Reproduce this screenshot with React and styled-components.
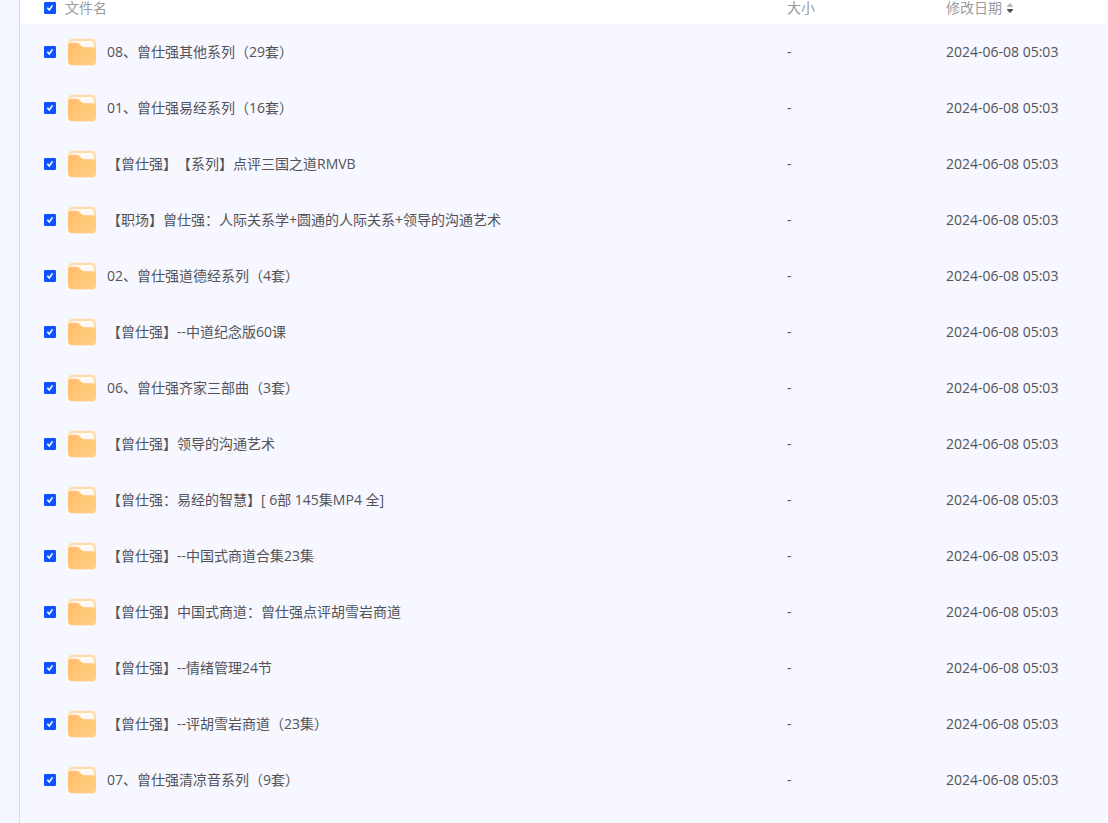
import React, { useState } from "react";
import styled, { createGlobalStyle } from "styled-components";

const GlobalStyle = createGlobalStyle`
  *, *::before, *::after {
    box-sizing: border-box;
  }
  body {
    margin: 0;
    background: #fff;
    font-family: "Open Sans", "Noto Sans CJK SC", sans-serif;
    font-size: 14px;
    line-height: 16px;
    color: #525358;
    text-spacing-trim: space-all;
  }
`;

const files = [
  "08、曾仕强其他系列（29套）",
  "01、曾仕强易经系列（16套）",
  "【曾仕强】【系列】点评三国之道RMVB",
  "【职场】曾仕强：人际关系学+圆通的人际关系+领导的沟通艺术",
  "02、曾仕强道德经系列（4套）",
  "【曾仕强】--中道纪念版60课",
  "06、曾仕强齐家三部曲（3套）",
  "【曾仕强】领导的沟通艺术",
  "【曾仕强：易经的智慧】[ 6部 145集MP4 全]",
  "【曾仕强】--中国式商道合集23集",
  "【曾仕强】中国式商道：曾仕强点评胡雪岩商道",
  "【曾仕强】--情绪管理24节",
  "【曾仕强】--评胡雪岩商道（23集）",
  "07、曾仕强清凉音系列（9套）",
  "",
].map((name, id) => ({
  id,
  name,
  size: name && "-",
  date: name && "2024-06-08 05:03",
}));

// Page layout
const Page = styled.div`
  display: flex;
  height: 100vh;
  overflow: hidden;
`;

const Sidebar = styled.aside`
  flex: none;
  width: 20px;
  background: #f3f6ff;
  border-right: 1px solid #d9dae3;
`;

const Main = styled.main`
  flex: 1;
  min-width: 0;
  padding-right: 2px;
`;

// File table
const Table = styled.table`
  width: 100%;
  table-layout: fixed;
  border-collapse: collapse;
`;

const Col = styled.col`
  width: ${({ $width }) => $width};
`;

const HeadCell = styled.th`
  height: 24px;
  padding: 0 0 8px ${({ $indent }) => $indent || "1px"};
  font-weight: 400;
  text-align: left;
  vertical-align: middle;
  color: #9a9b9f;
`;

const Row = styled.tr`
  height: 56px;
  background: linear-gradient(#f4f5fa, #f4f5fa) 24px 100% / 100% 1px no-repeat,
    #f7f7ff;
`;

const Cell = styled.td`
  height: 56px;
  padding: 0 0 0 ${({ $indent }) => $indent || "1px"};
  vertical-align: middle;
`;

const FileName = styled.label`
  display: flex;
  align-items: center;
  gap: 11px;
  white-space: nowrap;
`;

// Checkbox with its own tick drawn over the input
const CheckBox = styled.span`
  position: relative;
  display: block;
  width: 12px;
  height: 12px;
`;

const CheckInput = styled.input`
  appearance: none;
  display: block;
  width: 12px;
  height: 12px;
  margin: 0;
  border: 1px solid #c4c7d0;
  border-radius: 1px;
  background: #fff;
  &:checked {
    border-color: #0d53ff;
    background: #0d53ff;
  }
`;

const Tick = styled.svg`
  position: absolute;
  inset: 0;
  pointer-events: none;
`;

const Check = ({ id, label, checked, onChange }) => (
  <CheckBox>
    <CheckInput
      type="checkbox"
      id={id}
      aria-label={label}
      checked={checked}
      onChange={onChange}
    />
    {checked && (
      <Tick width="12" height="12" viewBox="0 0 12 12" fill="none">
        <path d="M3.3 5.8 5.3 8 8.5 3.4" stroke="#fff" strokeWidth="1.6" />
      </Tick>
    )}
  </CheckBox>
);

const SortButton = styled.button`
  display: flex;
  align-items: center;
  gap: 4px;
  padding: 0;
  border: 0;
  background: none;
  font: inherit;
  color: inherit;
`;

const SortIcon = () => (
  <svg width="8" height="12" viewBox="0 0 8 12">
    <path d="M1.4 4.5V4L4 1.5 6.6 4V4.5Z" fill="#b8b8bc" stroke="#b8b8bc" strokeLinejoin="round" />
    <path d="M1.4 7.5V8L4 10.5 6.6 8V7.5Z" fill="#4b4c50" stroke="#4b4c50" strokeLinejoin="round" />
  </svg>
);

const FolderIcon = () => (
  <svg width="28" height="28" viewBox="0 0 28 28">
    <defs>
      <linearGradient id="folder" x1="0" y1="0" x2="1" y2="1">
        <stop offset="0" stopColor="#ffbd6b" />
        <stop offset="1" stopColor="#ffd083" />
      </linearGradient>
    </defs>
    <rect y="0.8" width="28" height="26.8" rx="4.5" fill="#ffdcae" />
    <path d="M2.5 5Q3 3 5.5 3H23.5Q26 3 26 5.5V12H2.5Z" fill="#fffaf3" />
    <path
      d="M0 8.6Q0 4.8 4 4.8H8.2Q10.4 4.8 12 6.5L13.2 7.9Q14.4 9.2 16 9.2H24.5Q28 9.2 28 12.6V22.8Q28 27 23.6 27H4.4Q0 27 0 22.8Z"
      fill="url(#folder)"
    />
  </svg>
);

export default function App() {
  const [selected, setSelected] = useState(files.map(() => true));
  const allSelected = selected.every(Boolean);

  const toggle = (id) =>
    setSelected(selected.map((on, i) => (i === id ? !on : on)));

  return (
    <>
      <GlobalStyle />
      <Page>
        <Sidebar />
        <Main>
          <Table>
            <colgroup>
              <Col $width="44px" />
              <Col />
              <Col $width="160px" />
              <Col $width="161px" />
            </colgroup>
            <thead>
              <tr>
                <HeadCell $indent="24px">
                  <Check
                    id="all"
                    label="全选"
                    checked={allSelected}
                    onChange={() => setSelected(files.map(() => !allSelected))}
                  />
                </HeadCell>
                <HeadCell>文件名</HeadCell>
                <HeadCell $indent="2px">大小</HeadCell>
                <HeadCell>
                  <SortButton type="button">
                    修改日期
                    <SortIcon />
                  </SortButton>
                </HeadCell>
              </tr>
            </thead>
            <tbody>
              {files.map(({ id, name, size, date }) => (
                <Row key={id}>
                  <Cell $indent="24px">
                    <Check
                      id={`file-${id}`}
                      checked={selected[id]}
                      onChange={() => toggle(id)}
                    />
                  </Cell>
                  <Cell $indent="4px">
                    <FileName htmlFor={`file-${id}`}>
                      <FolderIcon />
                      {name}
                    </FileName>
                  </Cell>
                  <Cell $indent="2px">{size}</Cell>
                  <Cell>{date}</Cell>
                </Row>
              ))}
            </tbody>
          </Table>
        </Main>
      </Page>
    </>
  );
}
